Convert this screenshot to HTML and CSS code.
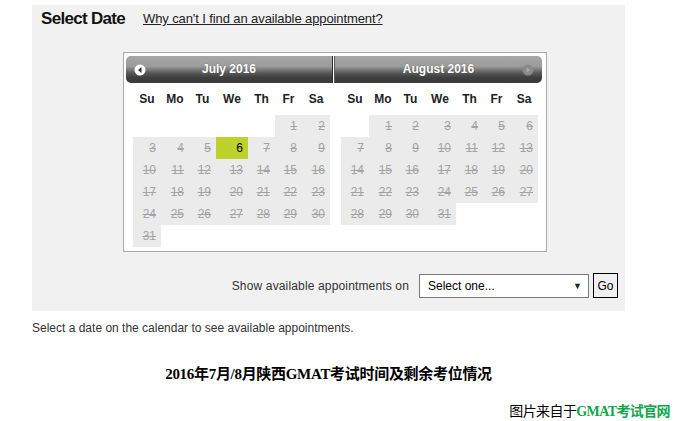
FILE: index.html
```html
<html>
<head>
    <title>Select Date</title>
    <link rel="stylesheet" href="styles.css">
</head>
<body>
    <div class="panel">
        <div class="title-row">
            <h2>Select Date</h2>
            <a href="#">Why can't I find an available appointment?</a>
        </div>

        <div class="calendar">
            <div class="month">
                <div class="month-head first">
                    <svg class="nav prev" width="12" height="12" viewBox="0 0 12 12">
                        <circle cx="6" cy="6" r="5.5" fill="#fff"/>
                        <path d="M7.5 3 L4 6 L7.5 9 Z" fill="#333"/>
                    </svg>
                    July 2016
                </div>
                <div class="days">
                    <div class="dn">Su</div><div class="dn">Mo</div><div class="dn">Tu</div><div class="dn">We</div><div class="dn">Th</div><div class="dn">Fr</div><div class="dn">Sa</div>
                    <div class="blank"></div><div class="blank"></div><div class="blank"></div><div class="blank"></div><div class="blank"></div><div class="d">1</div><div class="d">2</div>
                    <div class="d">3</div><div class="d">4</div><div class="d">5</div><div class="d today">6</div><div class="d">7</div><div class="d">8</div><div class="d">9</div>
                    <div class="d">10</div><div class="d">11</div><div class="d">12</div><div class="d">13</div><div class="d">14</div><div class="d">15</div><div class="d">16</div>
                    <div class="d">17</div><div class="d">18</div><div class="d">19</div><div class="d">20</div><div class="d">21</div><div class="d">22</div><div class="d">23</div>
                    <div class="d">24</div><div class="d">25</div><div class="d">26</div><div class="d">27</div><div class="d">28</div><div class="d">29</div><div class="d">30</div>
                    <div class="d">31</div>
                </div>
            </div>
            <div class="month">
                <div class="month-head last">
                    August 2016
                    <svg class="nav next" width="12" height="12" viewBox="0 0 12 12">
                        <circle cx="6" cy="6" r="5.5" fill="#8a8a8a"/>
                        <path d="M4.5 3 L8 6 L4.5 9 Z" fill="#a8a8a8"/>
                    </svg>
                </div>
                <div class="days">
                    <div class="dn">Su</div><div class="dn">Mo</div><div class="dn">Tu</div><div class="dn">We</div><div class="dn">Th</div><div class="dn">Fr</div><div class="dn">Sa</div>
                    <div class="blank"></div><div class="d">1</div><div class="d">2</div><div class="d">3</div><div class="d">4</div><div class="d">5</div><div class="d">6</div>
                    <div class="d">7</div><div class="d">8</div><div class="d">9</div><div class="d">10</div><div class="d">11</div><div class="d">12</div><div class="d">13</div>
                    <div class="d">14</div><div class="d">15</div><div class="d">16</div><div class="d">17</div><div class="d">18</div><div class="d">19</div><div class="d">20</div>
                    <div class="d">21</div><div class="d">22</div><div class="d">23</div><div class="d">24</div><div class="d">25</div><div class="d">26</div><div class="d">27</div>
                    <div class="d">28</div><div class="d">29</div><div class="d">30</div><div class="d">31</div>
                </div>
            </div>
        </div>

        <div class="controls">
            <label>Show available appointments on</label>
            <div class="select-box">
                <span>Select one...</span>
                <span class="arrow">&#9660;</span>
            </div>
            <button>Go</button>
        </div>
    </div>

    <p class="hint">Select a date on the calendar to see available appointments.</p>

    <p class="cn-title">2016年7月/8月陕西GMAT考试时间及剩余考位情况</p>

    <p class="credit">图片来自于<b>GMAT考试官网</b></p>
</body>
</html>
```

FILE: styles.css
```css
body {
    margin: 0;
    font-family: 'Liberation Sans', Arial, sans-serif;
    font-size: 12px;
    color: #333;
    background: #fff;
}
.panel {
    margin: 5px 0 0 32px;
    width: 593px;
    background: #f1f1f1;
    padding-bottom: 13px;
}
.title-row {
    display: flex;
    align-items: center;
    height: 27px;
    padding-left: 9px;
}
.title-row h2 {
    margin: 0;
    font-size: 17px;
    letter-spacing: -0.7px;
    color: #111;
}
.title-row a {
    margin-left: 18px;
    font-size: 13px;
    letter-spacing: -0.1px;
    color: #222;
}
.calendar {
    display: flex;
    margin: 20px 0 0 91px;
    width: 416px;
    padding: 3px 4px 4px 2px;
    background: #fff;
    border: 1px solid #aaa;
}
.month {
    width: 208px;
}
.month-head {
    position: relative;
    height: 27px;
    line-height: 27px;
    text-align: center;
    font-weight: bold;
    font-size: 12px;
    color: #fff;
    text-shadow: 0 0 1px #555;
    background: linear-gradient(#a6a6a6 0%, #9c9c9c 38%, #5a5a5a 62%, #3e3e3e 80%, #3a3a3a 100%);
}
.month-head.first {
    border-radius: 5px 0 0 5px;
    border-right: 1px solid #2e2e2e;
    width: 206px;
}
.month-head.last {
    border-radius: 0 5px 5px 0;
    border-left: 1px solid #5a5a5a;
    width: 207px;
}
.nav {
    position: absolute;
    top: 8px;
}
.nav.prev {
    left: 8px;
}
.nav.next {
    right: 8px;
}
.days {
    display: grid;
    grid-template-columns: 28px 28px 27px 32px 27px 27px 28px;
    grid-template-rows: 32px;
    grid-auto-rows: 22px;
    margin-left: 7px;
}
.dn {
    line-height: 32px;
    text-align: center;
    font-weight: bold;
    color: #222;
}
.d {
    background: #ebebeb;
    color: #a3a3a3;
    text-decoration: line-through;
    text-align: right;
    padding-right: 5px;
    line-height: 22px;
}
.d.today {
    background: #bdd22b;
    color: #000;
    text-decoration: none;
}
.controls {
    display: flex;
    justify-content: flex-end;
    align-items: center;
    margin-top: 21px;
    padding-right: 7px;
    height: 25px;
}
.controls label {
    margin-right: 10px;
    letter-spacing: 0.15px;
    color: #333;
}
.select-box {
    display: flex;
    justify-content: space-between;
    align-items: center;
    box-sizing: border-box;
    width: 170px;
    height: 24px;
    padding: 0 6px 0 8px;
    background: #fff;
    border: 1px solid #7a7a7a;
    color: #000;
}
.select-box .arrow {
    font-size: 9px;
    color: #222;
}
.controls button {
    box-sizing: border-box;
    width: 25px;
    height: 25px;
    margin-left: 4px;
    padding: 0;
    border: 1px solid #000;
    background: #f0f0f0;
    font-family: 'Liberation Sans', Arial, sans-serif;
    font-size: 12px;
    color: #000;
}
.hint {
    margin: 10px 0 0 32px;
    color: #333;
}
.cn-title {
    margin: 27px 0 0 32px;
    width: 593px;
    text-align: center;
    font-family: 'Liberation Serif', 'Noto Sans CJK SC', serif;
    font-weight: bold;
    font-size: 15px;
    letter-spacing: -0.3px;
    color: #000;
}
.credit {
    margin: 17px 11px 0 0;
    text-align: right;
    font-family: 'Liberation Serif', 'Noto Sans CJK SC', serif;
    font-size: 14px;
    letter-spacing: -0.6px;
    color: #000;
}
.credit b {
    color: #12a54a;
}
```
